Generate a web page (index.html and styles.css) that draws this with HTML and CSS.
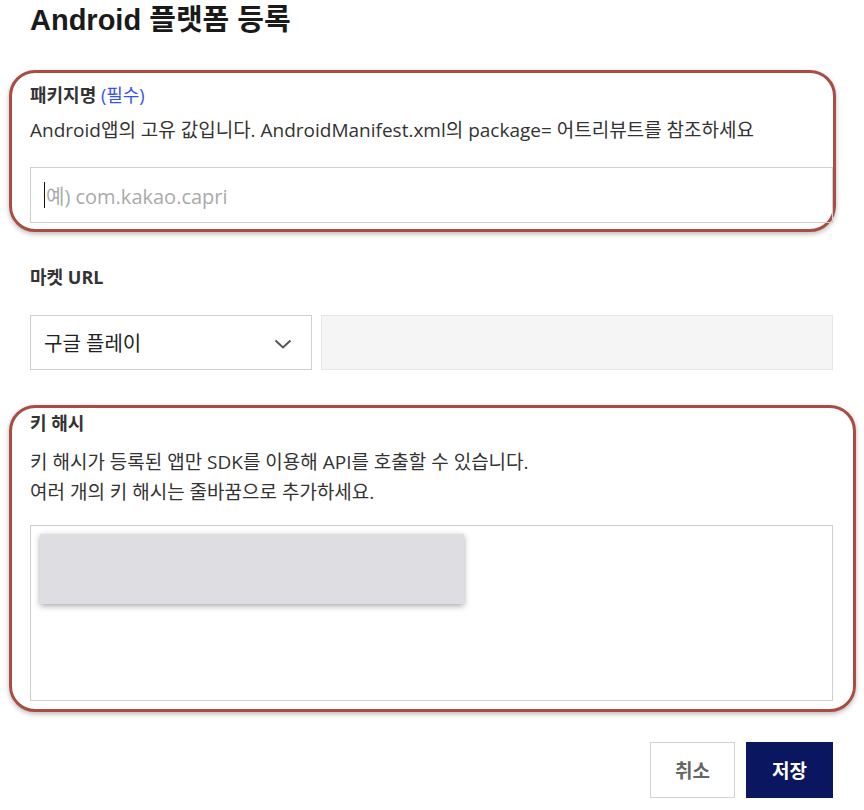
FILE: index.html
```html
<!DOCTYPE html>
<html lang="ko">
<head>
<meta charset="utf-8">
<title>Android 플랫폼 등록</title>
<link rel="stylesheet" href="styles.css">
</head>
<body>
<div class="page">
  <h1 class="title">Android 플랫폼 등록</h1>

  <section class="hl hl-pkg">
    <div class="label">패키지명 <span class="req">(필수)</span></div>
    <p class="desc">Android앱의 고유 값입니다. AndroidManifest.xml의 package= 어트리뷰트를 참조하세요</p>
    <div class="input"><span class="caret"></span><span class="ph">예) com.kakao.capri</span></div>
  </section>

  <section class="market">
    <div class="label">마켓 URL</div>
    <div class="market-row">
      <div class="select">
        <span>구글 플레이</span>
        <svg class="chev" width="18" height="10" viewBox="0 0 18 10"><path d="M1.5 1.5 L9 8.5 L16.5 1.5" fill="none" stroke="#555" stroke-width="2"/></svg>
      </div>
      <div class="url-input"></div>
    </div>
  </section>

  <section class="hl hl-hash">
    <div class="label">키 해시</div>
    <p class="desc desc-multi">키 해시가 등록된 앱만 SDK를 이용해 API를 호출할 수 있습니다.<br>여러 개의 키 해시는 줄바꿈으로 추가하세요.</p>
    <div class="textarea"><div class="suggest"></div></div>
  </section>

  <div class="actions">
    <button class="btn btn-cancel">취소</button>
    <button class="btn btn-save">저장</button>
  </div>
</div>
</body>
</html>
```
FILE: styles.css
```css
* { box-sizing: border-box; }
html, body { margin: 0; padding: 0; background: #fff; }
body {
  font-family: "Open Sans", "Noto Sans CJK KR", sans-serif;
  color: #333;
}
.page {
  width: 803px;
  margin-left: 30px;
  padding-top: 2px;
}
.title {
  margin: 0;
  font-family: "Liberation Sans", "Noto Sans CJK KR", sans-serif;
  font-size: 29px;
  line-height: 36px;
  font-weight: 700;
  color: #1a1a1a;
}
.label {
  font-size: 18px;
  line-height: 22px;
  font-weight: 700;
  color: #333;
}
.req { color: #3453f0; font-weight: 400; }
.desc {
  margin: 12px 0 0;
  font-size: 19px;
  line-height: 24px;
  color: #333;
}
.hl {
  border: 3px solid #a84d43;
  border-radius: 26px;
  box-shadow: 0 2px 5px rgba(0,0,0,0.28);
}
.hl-pkg {
  margin: 32px -3px 0 -21px;
  padding: 11px 0 6px 18px;
}
.input {
  margin-top: 25px;
  height: 56px;
  border: 1px solid #cfcfcf;
  display: flex;
  align-items: center;
  padding-left: 13px;
}
.caret {
  width: 1px;
  height: 26px;
  background: #111;
  margin-right: 1px;
}
.ph {
  font-size: 20px;
  color: #aaa;
}
.market { margin-top: 34px; }
.market-row {
  margin-top: 27px;
  display: flex;
  gap: 9px;
}
.select {
  width: 282px;
  height: 55px;
  border: 1px solid #d0d0d0;
  display: flex;
  align-items: center;
  justify-content: space-between;
  padding: 0 19px 0 13px;
  font-size: 20px;
  color: #222;
}
.chev { display: block; margin-top: 2px; }
.url-input {
  flex: 1;
  height: 55px;
  border: 1px solid #e6e6e6;
  background: #f5f5f5;
}
.hl-hash {
  margin: 35px -23px 0 -21px;
  padding: 4px 20px 8px 18px;
}
.desc-multi {
  margin-top: 13px;
  line-height: 30px;
}
.textarea {
  margin-top: 18px;
  height: 176px;
  border: 1px solid #cfcfcf;
  padding: 8px 9px;
}
.suggest {
  width: 424px;
  height: 70px;
  background: #dedde1;
  box-shadow: 0 2px 6px rgba(0,0,0,0.35);
}
.actions {
  margin-top: 30px;
  display: flex;
  justify-content: flex-end;
  gap: 11px;
}
.btn {
  height: 56px;
  font-family: inherit;
  font-size: 19px;
  font-weight: 700;
  cursor: pointer;
}
.btn-cancel {
  width: 85px;
  border: 1px solid #d3d3d3;
  background: #fff;
  color: #666;
}
.btn-save {
  width: 87px;
  border: 1px solid #0b1660;
  background: #0b1660;
  color: #fff;
}
```
